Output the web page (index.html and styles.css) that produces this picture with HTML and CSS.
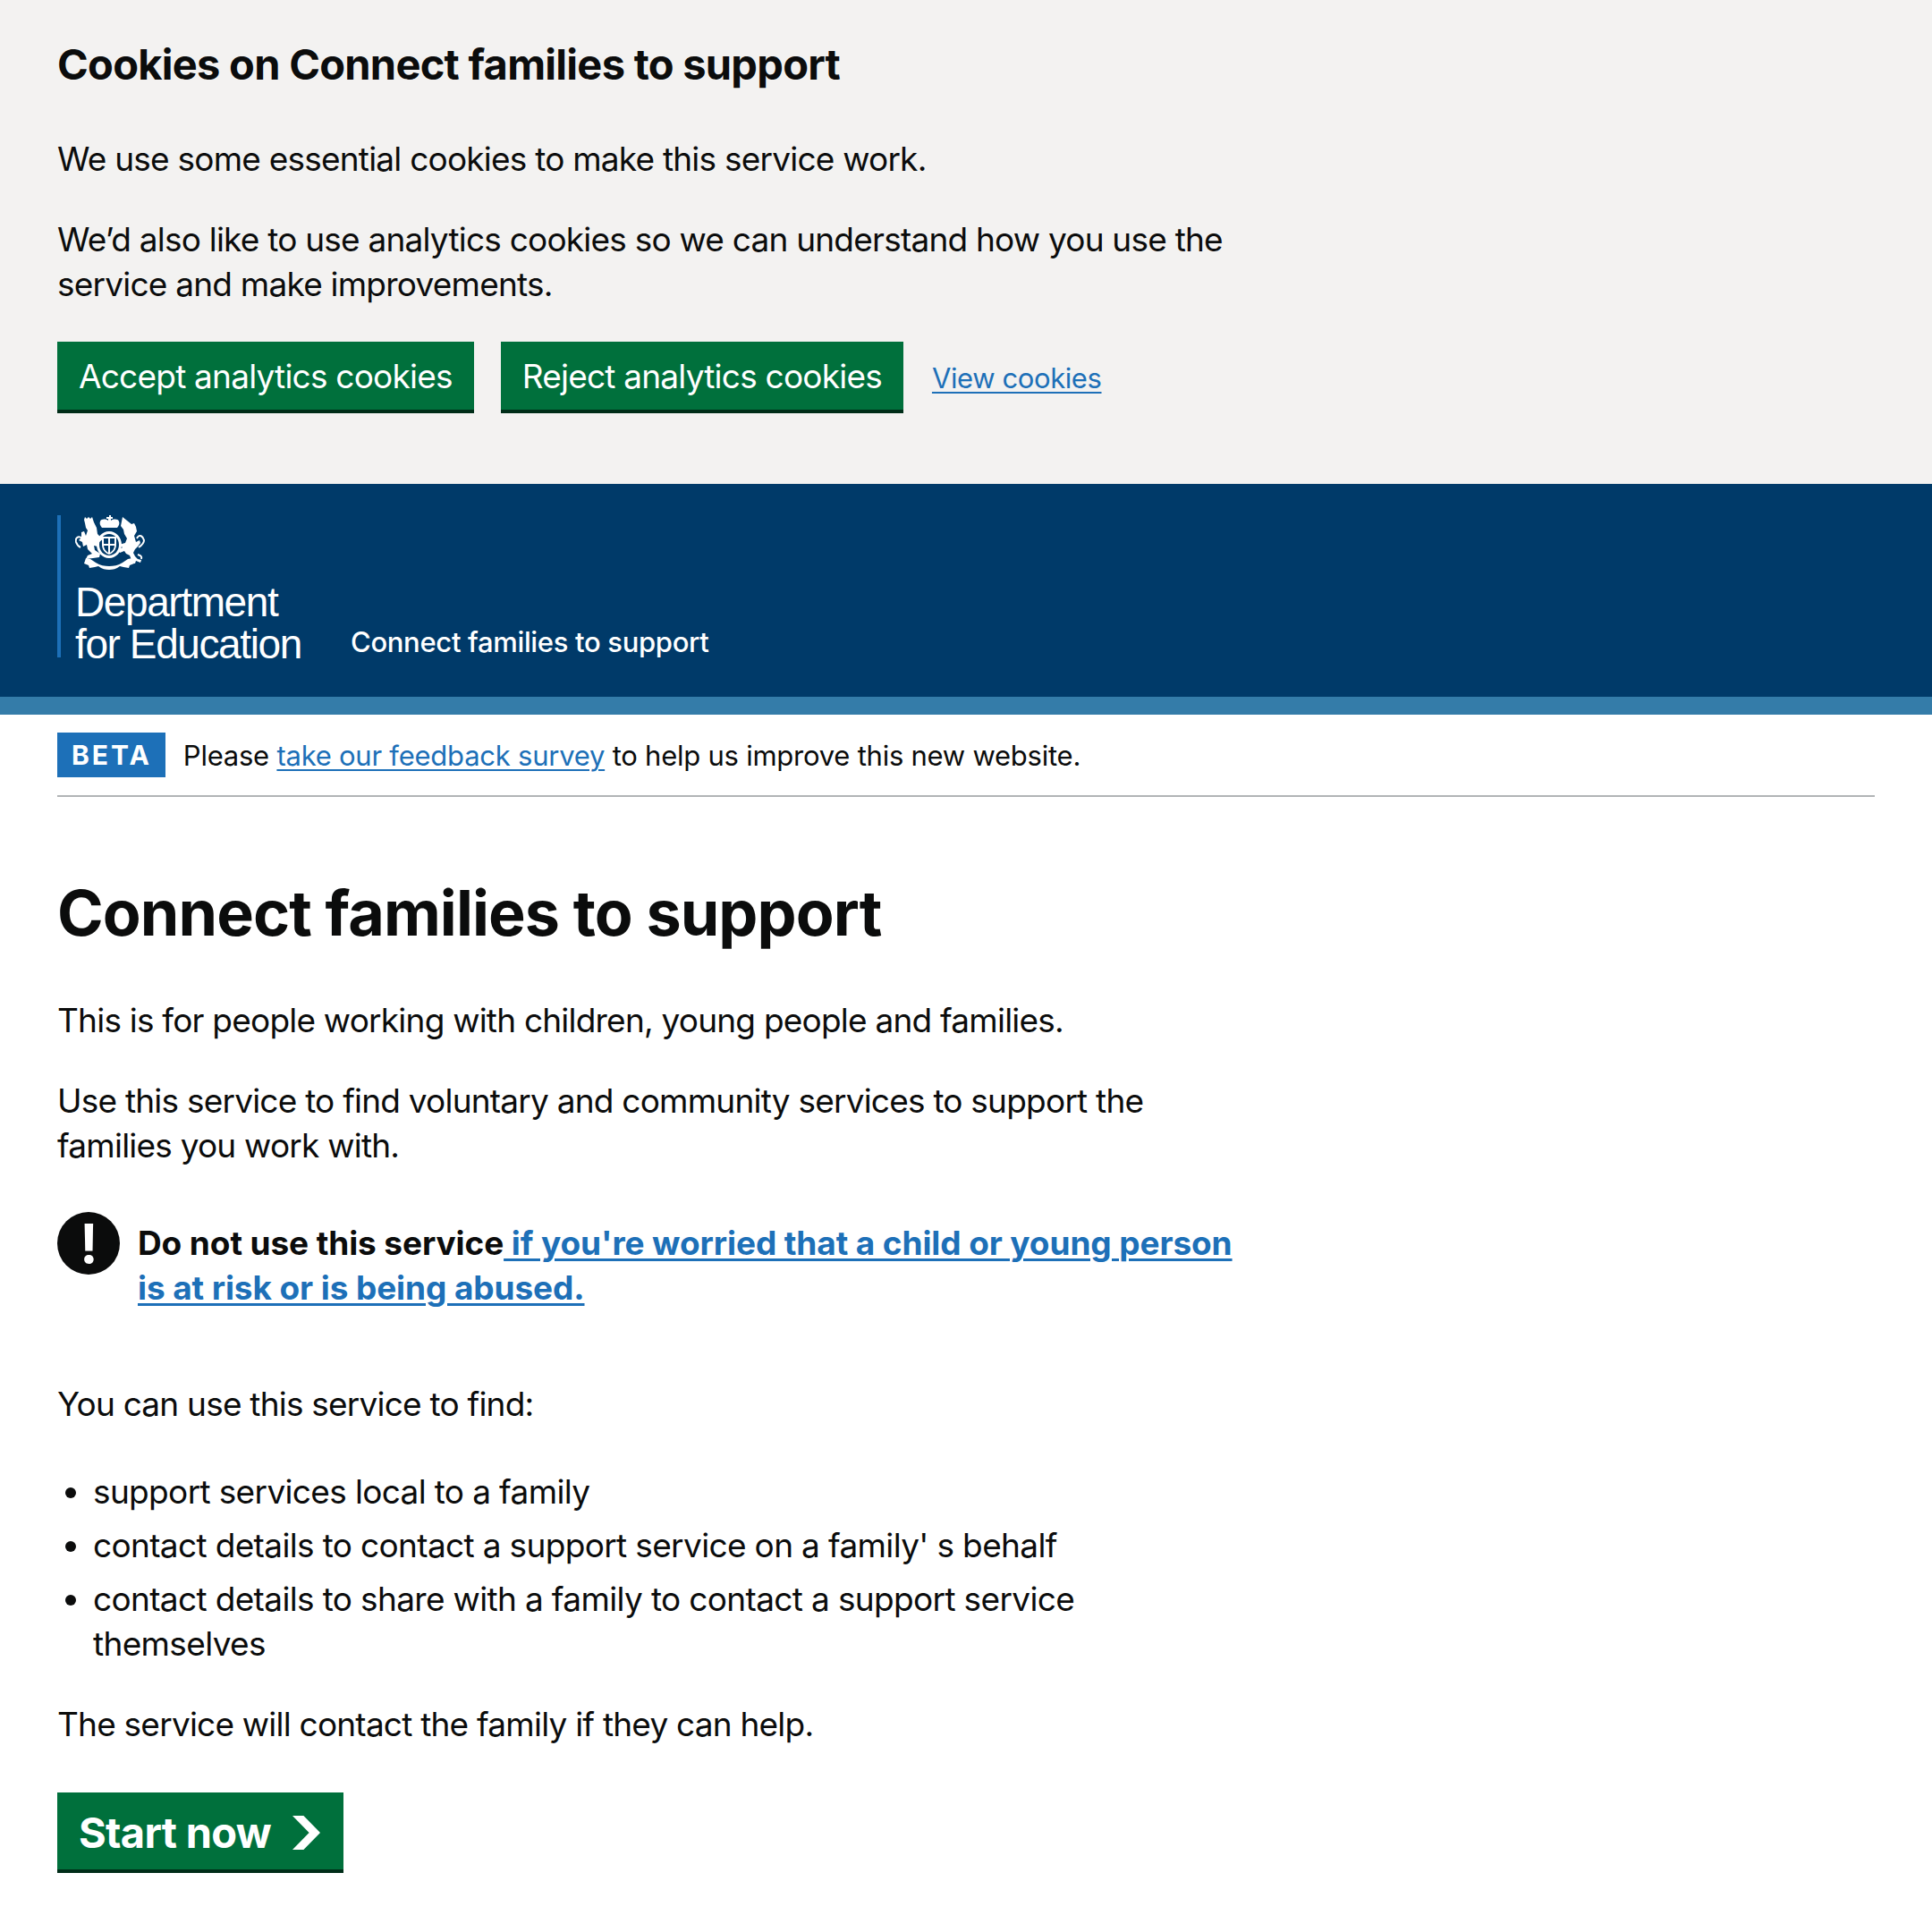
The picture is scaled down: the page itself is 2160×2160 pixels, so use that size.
FILE: index.html
```html
<!DOCTYPE html>
<html lang="en">
<head>
  <meta charset="UTF-8" />
  <title>Connect families to support</title>
  <link rel="stylesheet" href="styles.css">
</head>
<body>
  <div class="cookie-banner">
    <h2 class="cookie-title">Cookies on Connect families to support</h2>
    <div class="column">
      <p class="body">We use some essential cookies to make this service work.</p>
      <p class="body">We’d also like to use analytics cookies so we can understand how you use the service and make improvements.</p>
    </div>
    <div class="cookie-actions">
      <a class="button">Accept analytics cookies</a>
      <a class="button">Reject analytics cookies</a>
      <a class="link cookie-link" href="#">View cookies</a>
    </div>
  </div>

  <header class="header">
    <div class="logo">
      <svg class="crest" viewBox="0 0 78 64" fill="#fff">
        <!-- crown -->
        <path d="M38 0h2v2h2v2h-2v2c3-2 8-2 9 1 1 2 0 5-2 7H30c-2-2-3-5-2-7 1-3 6-3 9-1V4h-2V2h3z"/>
        <!-- lion -->
        <path d="M11 2l2 2 2-2 2 2 2-2 2 6 3 6 1 7 3 3 3-1 1 3-5 4-2 5-4-1 1 5 6 4-1 4-7 1-8 1 2-4 5-2-5-5-1-5-4 2-1-5-4-2 3-3 0-6 3-1 2 5 2-6-2-3-1-5-1-4z"/>
        <path d="M8 26C3 22 0 26 1 30c1 3 3 5 5 6" fill="none" stroke="#fff" stroke-width="2"/>
        <!-- unicorn -->
        <path d="M53 2l10 8 3-1 2 4 1 5-3 5 2 7 4-2 1 3-3 4-3 3-2 4 2 4 3 3 4 1-1 3-5-2-1 3-6-1 2-3-2-5-4-2-2-3-5 2-2-3 5-3-4-3 7-2 2-5-3-5-1-5-3-4z"/>
        <path d="M69 26c3-6 7-2 8 2 0 3-3 6-6 8M70 44c3 1 5 2 4 5" fill="none" stroke="#fff" stroke-width="2"/>
        <!-- shield in garter -->
        <path fill-rule="evenodd" d="M38 18c8 0 14 7 14 15s-6 15-14 15-14-7-14-15 6-15 14-15zm0 3c-6 0-11 5-11 12s5 12 11 12 11-5 11-12-5-12-11-12z"/>
        <path fill-rule="evenodd" d="M30 24h16v9c0 5-3 9-8 11-5-2-8-6-8-11zm7 2h-5v6h5zm2 0v6h5v-6zm-2 8h-5c0 3 2 6 5 8zm2 0v8c3-2 5-5 5-8z"/>
        <!-- motto ribbon -->
        <path d="M12 48l5 1 6 4c5 3 10 4 15 4s10-1 15-4l6-4 5-1 2 6-5 2-1 3-6-1-4-1c-4 3-8 4-12 4s-8-1-12-4l-4 1-6 1-1-3-5-2z"/>
      </svg>
      <div class="logo-text">Department<br>for Education</div>
    </div>
    <div class="service-name">Connect families to support</div>
  </header>
  <div class="header-band"></div>

  <div class="phase-banner">
    <strong class="tag">BETA</strong>
    <span class="phase-text">Please <a class="link" href="#">take our feedback survey</a> to help us improve this new website.</span>
  </div>

  <main class="main">
    <div class="column">
      <h1 class="title">Connect families to support</h1>
      <p class="body">This is for people working with children, young people and families.</p>
      <p class="body">Use this service to find voluntary and community services to support the families you work with.</p>

      <div class="warning">
        <span class="warning-icon">!</span>
        <strong class="warning-text">Do not use this service<a class="link" href="#"> if you're worried that a child or young person is at risk or is being abused.</a></strong>
      </div>

      <p class="body">You can use this service to find:</p>
      <ul class="list">
        <li>support services local to a family</li>
        <li>contact details to contact a support service on a family' s behalf</li>
        <li>contact details to share with a family to contact a support service themselves</li>
      </ul>
      <p class="body">The service will contact the family if they can help.</p>

      <a class="button start">Start now
        <svg class="chevron" viewBox="0 0 31 38"><path fill="#fff" d="M0 0h12.4L31 19 12.4 38H0l18.6-19z"/></svg>
      </a>
    </div>
  </main>
</body>
</html>
```

FILE: styles.css
```css
body {
  margin: 0;
  font-family: Inter, sans-serif;
  font-size: 37px;
  letter-spacing: -0.78px;
  line-height: 50px;
  color: #0b0c0c;
  background: #fff;
}

.column {
  width: 1335px;
}

.body {
  margin: 0 0 40px;
}

.link {
  color: #1d70b8;
  text-decoration: underline;
  text-decoration-thickness: 2px;
  text-underline-offset: 4px;
}

.cookie-banner {
  box-sizing: border-box;
  background: #f3f2f1;
  padding: 40px 64px 0;
  height: 541px;
}

.cookie-title {
  font-size: 47px;
  letter-spacing: -0.72px;
  line-height: 64px;
  font-weight: 700;
  margin: 0 0 49px;
}

.cookie-actions {
  display: flex;
  align-items: center;
  gap: 30px;
  margin-top: -1px;
}

.cookie-link {
  font-size: 31px;
  letter-spacing: -0.4px;
  padding-top: 6px;
  padding-left: 2px;
}

.button {
  display: inline-block;
  background: #00703c;
  color: #fff;
  padding: 14px 24px 12px;
  box-shadow: 0 4px 0 #002d18;
  line-height: 50px;
}

.header {
  background: #003a69;
  height: 238px;
  padding: 34px 0 44px 64px;
  box-sizing: border-box;
  display: flex;
  align-items: flex-end;
}

.header-band {
  height: 20px;
  background: #347ca9;
}

.logo {
  border-left: 4px solid #1d70b8;
  padding-left: 16px;
  color: #fff;
  height: 159px;
  width: 308px;
}

.crest {
  display: block;
  width: 78px;
  height: 64px;
}

.logo-text {
  font-family: "Liberation Sans", sans-serif;
  font-size: 46px;
  letter-spacing: -1.4px;
  line-height: 47px;
  margin-top: 10px;
}

.service-name {
  color: #fff;
  font-size: 31px;
  letter-spacing: -0.33px;
  line-height: 40px;
  font-weight: 500;
  margin-bottom: -3px;
}

.phase-banner {
  margin: 0 64px;
  padding: 20px 0;
  display: flex;
  align-items: center;
  gap: 20px;
  font-size: 31px;
  letter-spacing: -0.24px;
  border-bottom: 2px solid #b1b4b6;
}

.phase-text {
  padding-top: 2px;
  line-height: 48px;
}

.tag {
  background: #1d70b8;
  color: #fff;
  font-size: 30px;
  font-weight: 700;
  letter-spacing: 3px;
  padding: 0 15px 0 16px;
  line-height: 50px;
}

.main {
  padding: 90px 64px 0;
}

.title {
  font-size: 70px;
  letter-spacing: -0.92px;
  line-height: 80px;
  font-weight: 700;
  margin: 0 0 55px;
}

.warning {
  display: flex;
  gap: 20px;
  margin: 49px 0 80px;
}

.warning-icon {
  flex: none;
  width: 70px;
  height: 70px;
  border-radius: 50%;
  background: #0b0c0c;
  color: #fff;
  font-size: 60px;
  font-weight: 700;
  line-height: 70px;
  text-align: center;
}

.warning-text {
  padding-top: 10px;
  letter-spacing: -0.1px;
}

.warning-text .link {
  text-decoration-thickness: 3px;
}

.list {
  margin: 48px 0 40px;
  padding: 0 0 0 40px;
  letter-spacing: -0.65px;
}

.list li {
  margin-bottom: 10px;
}

.start {
  display: inline-flex;
  align-items: center;
  gap: 24px;
  margin-top: 11px;
  font-size: 47px;
  letter-spacing: -0.7px;
  font-weight: 700;
  padding: 20px 26px 16px 24px;
  box-sizing: border-box;
  height: 90px;
  box-shadow: none;
  border-bottom: 4px solid #002d18;
}

.chevron {
  width: 31px;
  height: 38px;
}
```
